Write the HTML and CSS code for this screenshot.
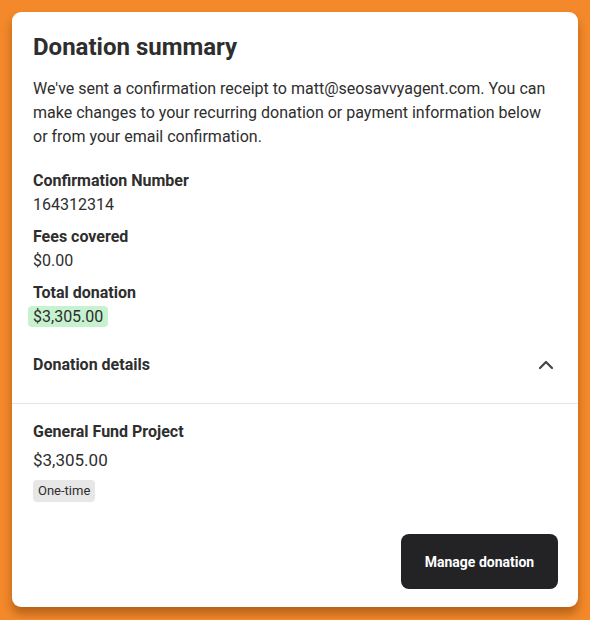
FILE: index.html
```html
<!DOCTYPE html>
<html lang="en">
<head>
    <meta charset="UTF-8">
    <meta name="viewport" content="width=device-width, initial-scale=1.0">
    <title>Donation summary</title>
    <link rel="stylesheet" href="styles.css">
</head>
<body>
    <div class="card">
        <div class="summary">
            <h1>Donation summary</h1>
            <p class="intro">We've sent a confirmation receipt to matt@seosavvyagent.com. You can make changes to your recurring donation or payment information below or from your email confirmation.</p>

            <div class="field">
                <div class="label">Confirmation Number</div>
                <div class="value">164312314</div>
            </div>
            <div class="field">
                <div class="label">Fees covered</div>
                <div class="value">$0.00</div>
            </div>
            <div class="field">
                <div class="label">Total donation</div>
                <div class="value"><span class="highlight">$3,305.00</span></div>
            </div>
        </div>

        <div class="details-head">
            <span>Donation details</span>
            <svg class="chevron" width="16" height="16" viewBox="0 0 16 16">
                <path d="M2 11 L8 5 L14 11" fill="none" stroke="#444" stroke-width="2.2" stroke-linecap="round" stroke-linejoin="round"/>
            </svg>
        </div>

        <div class="details">
            <div class="project">General Fund Project</div>
            <div class="amount">$3,305.00</div>
            <span class="badge">One-time</span>
        </div>

        <div class="actions">
            <button class="manage-btn">Manage donation</button>
        </div>
    </div>
</body>
</html>
```

FILE: styles.css
```css
body {
    margin: 0;
    padding: 12px;
    background: #f3892a;
    font-family: Roboto, 'Liberation Sans', sans-serif;
    color: #2e2e2e;
}

.card {
    background: white;
    border-radius: 9px;
    height: 595px;
    box-sizing: border-box;
    box-shadow: 0 7px 10px rgba(90, 40, 0, 0.4);
    display: flex;
    flex-direction: column;
}

.summary {
    padding: 20px 21px 0;
}

h1 {
    margin: 0;
    font-size: 24px;
    line-height: 30px;
    font-weight: 700;
}

.intro {
    margin: 15px 0 20px;
    font-size: 16px;
    line-height: 24px;
}

.field {
    margin-bottom: 8px;
    font-size: 16px;
    line-height: 24px;
}

.field:last-child {
    margin-bottom: 0;
}

.label {
    font-weight: 700;
}

.highlight {
    display: inline-block;
    background: #c6f2cf;
    border-radius: 4px;
    padding: 0 5px;
    margin-left: -5px;
    line-height: 21px;
}

.details-head {
    display: flex;
    justify-content: space-between;
    align-items: center;
    padding: 24px 21px 26px;
    font-size: 16px;
    line-height: 24px;
    font-weight: 700;
    border-bottom: 1px solid #e4e4e4;
}

.chevron {
    margin-right: 3px;
}

.details {
    padding: 16px 21px 0;
}

.project {
    font-size: 16px;
    line-height: 24px;
    font-weight: 700;
}

.amount {
    margin-top: 4px;
    font-size: 17px;
    line-height: 24px;
}

.badge {
    display: inline-block;
    margin-top: 8px;
    padding: 0 5px;
    background: #e7e7e7;
    border-radius: 4px;
    font-size: 13px;
    line-height: 22px;
}

.actions {
    margin-top: auto;
    padding: 0 20px 18px;
    display: flex;
    justify-content: flex-end;
}

.manage-btn {
    background: #232325;
    color: white;
    border: none;
    border-radius: 8px;
    width: 157px;
    height: 55px;
    font-family: Roboto, 'Liberation Sans', sans-serif;
    font-size: 14px;
    font-weight: 700;
    cursor: pointer;
}
```
